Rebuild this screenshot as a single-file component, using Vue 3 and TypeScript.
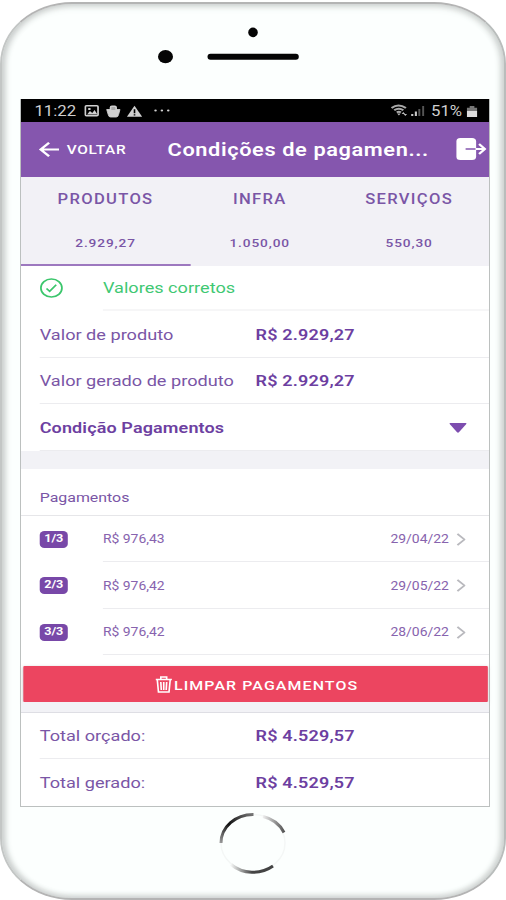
<script setup lang="ts">
interface Tab { label: string; value: string }
interface Line { label: string; value: string }
interface Payment { index: string; amount: string; date: string }

const tabs: Tab[] = [
  { label: 'PRODUTOS', value: '2.929,27' },
  { label: 'INFRA', value: '1.050,00' },
  { label: 'SERVIÇOS', value: '550,30' },
]
const values: Line[] = [
  { label: 'Valor de produto', value: 'R$ 2.929,27' },
  { label: 'Valor gerado de produto', value: 'R$ 2.929,27' },
]
const payments: Payment[] = [
  { index: '1/3', amount: 'R$ 976,43', date: '29/04/22' },
  { index: '2/3', amount: 'R$ 976,42', date: '29/05/22' },
  { index: '3/3', amount: 'R$ 976,42', date: '28/06/22' },
]
const totals: Line[] = [
  { label: 'Total orçado:', value: 'R$ 4.529,57' },
  { label: 'Total gerado:', value: 'R$ 4.529,57' },
]
</script>

<template>
  <div class="phone">
    <svg class="sensors" viewBox="0 0 506 95" aria-hidden="true">
      <circle cx="253" cy="28.400" r="4.800" />
      <ellipse cx="165.500" cy="52.700" rx="7.500" ry="6.600" />
      <rect x="207.500" y="49.800" width="91.300" height="6" rx="3" />
    </svg>

    <div class="bezel">
      <main class="screen">
        <div class="status">
          <span class="clock">11:22</span>
          <svg class="status-icons" viewBox="0 0 76 16" preserveAspectRatio="none">
            <rect x="1" y="2.800" width="11" height="10" rx="1" fill="none" stroke="#d0d0d0" stroke-width="1.500" />
            <path d="M2.500 11.500 5 8l2 2 2-3 2.500 4.500zM3.500 5h2v2h-2z" fill="#d0d0d0" />
            <path d="M19.500 6.500h11.500l-1.200 5q-.4 2.500-2 2.500h-5q-1.600 0-2-2.500z" fill="#d0d0d0" stroke="#d0d0d0" stroke-width=".8" stroke-linejoin="round" />
            <path d="M22.800 7V4.500q0-1.200 1.200-1.200h2.500q1.200 0 1.200 1.200V7" fill="#aaa" stroke="#d0d0d0" stroke-width="1.400" />
            <path d="M43.600 2.800 50.200 13.700H37z" fill="#d0d0d0" />
            <path d="M42.900 6.300h1.400v3.900h-1.400zM42.900 11.200h1.400v1.300h-1.400z" fill="#000" />
            <g fill="#d0d0d0"><circle cx="61.800" cy="7.500" r="1.100" /><circle cx="67.300" cy="7.500" r="1.100" /><circle cx="72.800" cy="7.500" r="1.100" /></g>
          </svg>
          <svg class="signal" viewBox="0 0 29 16" preserveAspectRatio="none">
            <g fill="none" stroke="#a9a9a9" stroke-width="2">
              <path d="M.7 5Q6.500 0 13 5" /><path d="M3 7.300q3.800-3 7.800 0" /><path d="M5.200 9.500q1.800-1.400 3.500 0" />
            </g>
            <path d="M5.500 10.500h3L7 12.500zM10.800 9l1.500 2h-3zM12.500 13l1.500-2h-3z" fill="#bbb" />
            <path d="M17.500 11h1.800v2h-1.800zM20.600 8.500h1.800V13h-1.800z" fill="#c8c8c8" />
            <path d="M23.600 6h1.700v7h-1.700zM26.900 3h1.700v10h-1.700z" fill="#555" />
          </svg>
          <span class="percent">51%</span>
          <svg class="battery" viewBox="0 0 9 14" preserveAspectRatio="none">
            <path d="M0 3h2.500V1h4v2H9v4H0z" fill="#777" /><path d="M0 6.500h9V13H0z" fill="#ddd" />
          </svg>
        </div>

        <header class="toolbar">
          <button class="back" type="button">
            <svg viewBox="0 0 18 18" preserveAspectRatio="none"><path d="M17.500 9H2.500M9 1.800 1.800 9 9 16.200" /></svg>
            <span>VOLTAR</span>
          </button>
          <h1>Condições de pagamen...</h1>
          <svg class="exit" viewBox="0 0 26 22" preserveAspectRatio="none">
            <rect x="0" y="0" width="17" height="22" rx="3.500" fill="#fff" />
            <path d="M8 11h9" stroke="#8556ae" stroke-width="1.600" fill="none" />
            <path d="M16.500 11h8M19.500 6l5 5-5 5" stroke="#fff" stroke-width="2" fill="none" />
          </svg>
        </header>

        <nav class="tabs">
          <div v-for="(tab, i) in tabs" :key="tab.label" class="tab" :class="{ active: i === 0 }">
            <span class="tab-label">{{ tab.label }}</span>
            <span class="tab-value">{{ tab.value }}</span>
          </div>
        </nav>

        <section class="list">
          <div class="check-row">
            <svg viewBox="0 0 20 20" preserveAspectRatio="none">
              <circle cx="10" cy="10" r="9" /><path d="m5.800 10.500 2.700 2.800 5.600-6.500" />
            </svg>
            <div class="check-text">Valores corretos</div>
          </div>
          <div v-for="line in values" :key="line.label" class="row">
            <span>{{ line.label }}</span><b>{{ line.value }}</b>
          </div>
          <div class="row select">
            <b>Condição Pagamentos</b>
            <svg viewBox="0 0 15 10" preserveAspectRatio="none"><path d="M.7 0h13.600q.9.200.3 1L8.300 9.300q-.8.900-1.600 0L.4 1Q-.2.200.7 0z" /></svg>
          </div>
        </section>

        <div class="gap"></div>

        <section class="payments">
          <h2>Pagamentos</h2>
          <div v-for="p in payments" :key="p.index" class="payment">
            <span class="badge">{{ p.index }}</span>
            <div class="payment-body">
              <span class="amount">{{ p.amount }}</span>
              <span class="date">{{ p.date }}</span>
              <svg viewBox="0 0 8 14" preserveAspectRatio="none"><path d="m1 1 6 6-6 6" /></svg>
            </div>
          </div>
        </section>

        <button class="clear" type="button">
          <svg viewBox="0 0 14 17" preserveAspectRatio="none">
            <path d="M0 3.500h14M4.500 3V1h5v2M1.500 4l1 12h9l1-12M4.500 6l.4 8M7 6v8M9.500 6l-.4 8" />
          </svg>
          <span>LIMPAR PAGAMENTOS</span>
        </button>

        <section class="totals">
          <div v-for="line in totals" :key="line.label" class="row">
            <span>{{ line.label }}</span><b>{{ line.value }}</b>
          </div>
        </section>
      </main>
    </div>

    <svg class="home" viewBox="0 0 80 72" aria-hidden="true">
      <defs>
        <linearGradient id="arc-left" x1="0" y1="1" x2="1" y2="0"><stop offset="0" stop-color="#999" /><stop offset=".45" stop-color="#111" /><stop offset="1" stop-color="#777" /></linearGradient>
        <linearGradient id="arc-right"><stop offset="0" stop-color="#eee" /><stop offset="1" stop-color="#555" /></linearGradient>
        <linearGradient id="arc-bottom"><stop offset="0" stop-color="#f4f6f5" /><stop offset=".5" stop-color="#444" /><stop offset="1" stop-color="#444" /></linearGradient>
      </defs>
      <ellipse cx="40" cy="36" rx="32" ry="28.500" stroke="#f4f7f6" stroke-width="1.500" />
      <path d="M8 36A32 28.500 0 0 1 40.500 7.500" stroke="url(#arc-left)" />
      <path d="M50 9.500A32 28.500 0 0 1 71 25.500" stroke="url(#arc-right)" />
      <path d="M18 57.500A32 28.500 0 0 0 60 59" stroke="url(#arc-bottom)" />
    </svg>
  </div>
</template>

<style>
body { margin: 0; background: #fff; }
</style>

<style scoped>
.phone {
  box-sizing: border-box;
  width: 506px;
  height: 898px;
  margin-top: 2px;
  display: flex;
  flex-direction: column;
  align-items: center;
  overflow: hidden;
  border: 2px solid #b4b4b4;
  border-left-color: #c3c6c5;
  border-right-color: #b9bdbc;
  border-radius: 72px / 62px;
  background: #fcfffe;
  box-shadow: inset 3px 0 6px #c8cccb, inset -3px 0 6px #ccd1cf, inset 0 3px 8px #ebeeed, inset 0 -3px 6px #eef1f0;
  font-family: Roboto, "Liberation Sans", sans-serif;
}
.sensors { flex: none; width: 506px; height: 95px; fill: #050505; }
.bezel {
  box-sizing: border-box;
  flex: none;
  width: 470px;
  height: 708px;
  margin-left: 4px;
  border: 1px solid #bcc0bf;
  border-top: 0;
}
/* Tall display: contents are laid out 400 units wide and stretched to the panel. */
.screen {
  width: 400px;
  height: 707px;
  display: flex;
  flex-direction: column;
  background: #fff;
  color: #7a56a6;
  transform: scaleX(1.17);
  transform-origin: 0 0;
}
.status { display: flex; align-items: center; height: 23px; background: #000; color: #cfcfcf; padding: 2px 10px 0 11.500px; box-sizing: border-box; font-size: 14.300px; }
.clock { width: 42.500px; }
.status-icons { width: 75px; height: 16px; }
.signal { width: 29px; height: 16px; margin-left: auto; }
.percent { margin-left: 5.500px; }
.battery { width: 9px; height: 13px; margin-left: 4px; }
.toolbar { display: flex; align-items: center; height: 55px; background: #8556ae; color: #fff; box-sizing: border-box; padding: 0 2px 0 14.500px; }
.back { display: flex; align-items: center; gap: 6.500px; width: 110.800px; padding: 0; border: 0; background: none; color: #fff; font: 500 13.200px Roboto, sans-serif; letter-spacing: .6px; }
.back svg { width: 18px; height: 17px; fill: none; stroke: #fff; stroke-width: 2.200; }
h1 { margin: 0; padding-top: 1px; font-size: 18.600px; line-height: 24px; font-weight: 600; letter-spacing: .52px; white-space: nowrap; }
.exit { width: 26px; height: 22px; margin-left: auto; }
.tabs { display: grid; grid-template-columns: 144.500px 119px 136.500px; height: 89px; background: #f2f1f6; }
.tab { display: flex; flex-direction: column; align-items: center; box-sizing: border-box; border-bottom: 2.500px solid transparent; padding-top: 13px; }
.tab.active { border-bottom-color: #9d78bf; }
.tab-label { height: 18px; line-height: 18px; font-size: 14.200px; font-weight: 500; letter-spacing: 1.100px; }
.tab-value { margin-top: 27px; line-height: 16px; font-size: 11.700px; font-weight: 500; letter-spacing: .75px; }
.check-row { display: flex; align-items: center; height: 45.500px; padding-left: 16px; }
.check-row svg { width: 20px; height: 20px; fill: none; stroke: #3bc66c; stroke-width: 1.500; flex: none; }
.check-text { flex: 1; box-sizing: border-box; height: 45.500px; margin-left: 34px; line-height: 44.500px; border-bottom: 2px solid #f6f6f7; color: #3fc873; font-size: 15.500px; letter-spacing: 0; }
.row { display: grid; grid-template-columns: 184.500px 1fr; align-items: center; box-sizing: border-box; height: 46.600px; padding-top: 1.500px; margin-left: 16px; border-bottom: 1.500px solid #ececef; font-size: 15.500px; }
.row b { font-size: 15.400px; font-weight: 600; color: #6d3fa1; letter-spacing: .15px; }
.select { grid-template-columns: 1fr auto; padding-right: 19px; }
.select b { letter-spacing: .1px; }
.select svg { width: 15px; height: 10px; fill: #7d4daf; }
.gap { height: 18px; background: #f2f2f6; flex: none; }
h2 { display: flex; align-items: center; box-sizing: border-box; height: 47px; margin: 0; padding: 11px 0 0 16px; border-bottom: 1px solid #e6e6e9; font-size: 13.600px; font-weight: 400; }
.payment { display: flex; align-items: center; height: 46.500px; padding-left: 16px; }
.badge { width: 24px; height: 17px; line-height: 16px; text-align: center; border-radius: 4px; background: #7848a8; color: #fff; font-size: 10.800px; font-weight: 700; }
.payment-body { flex: 1; display: flex; align-items: center; box-sizing: border-box; height: 46.500px; margin-left: 30px; padding: 1px 20.500px 0 0; border-bottom: 1.500px solid #ececef; font-size: 11.900px; color: #8763ae; }
.date { margin-left: auto; }
.payment-body svg { width: 8px; height: 13px; margin-left: 5.800px; fill: none; stroke: #b9b9be; stroke-width: 1.700; }
.clear { display: flex; align-items: center; justify-content: center; gap: 2px; flex: none; height: 35.500px; margin: 11px 1px 0 2px; padding: 1px 0 0 2px; box-sizing: border-box; border: 0; border-radius: 1px; background: #ec4560; box-shadow: 0 1px 3px #8888; color: #fff; font: 500 13.600px Roboto, sans-serif; letter-spacing: .96px; }
.clear svg { width: 14px; height: 17px; fill: none; stroke: #fff; stroke-width: 1.400; }
.totals { margin-top: 10px; border-top: 1px solid #dedee4; box-shadow: 0 -10px #f2f2f6; }
.totals .row:last-child { border-bottom: 0; }
.home { flex: none; width: 80px; height: 72px; fill: none; stroke-width: 3; }
</style>
